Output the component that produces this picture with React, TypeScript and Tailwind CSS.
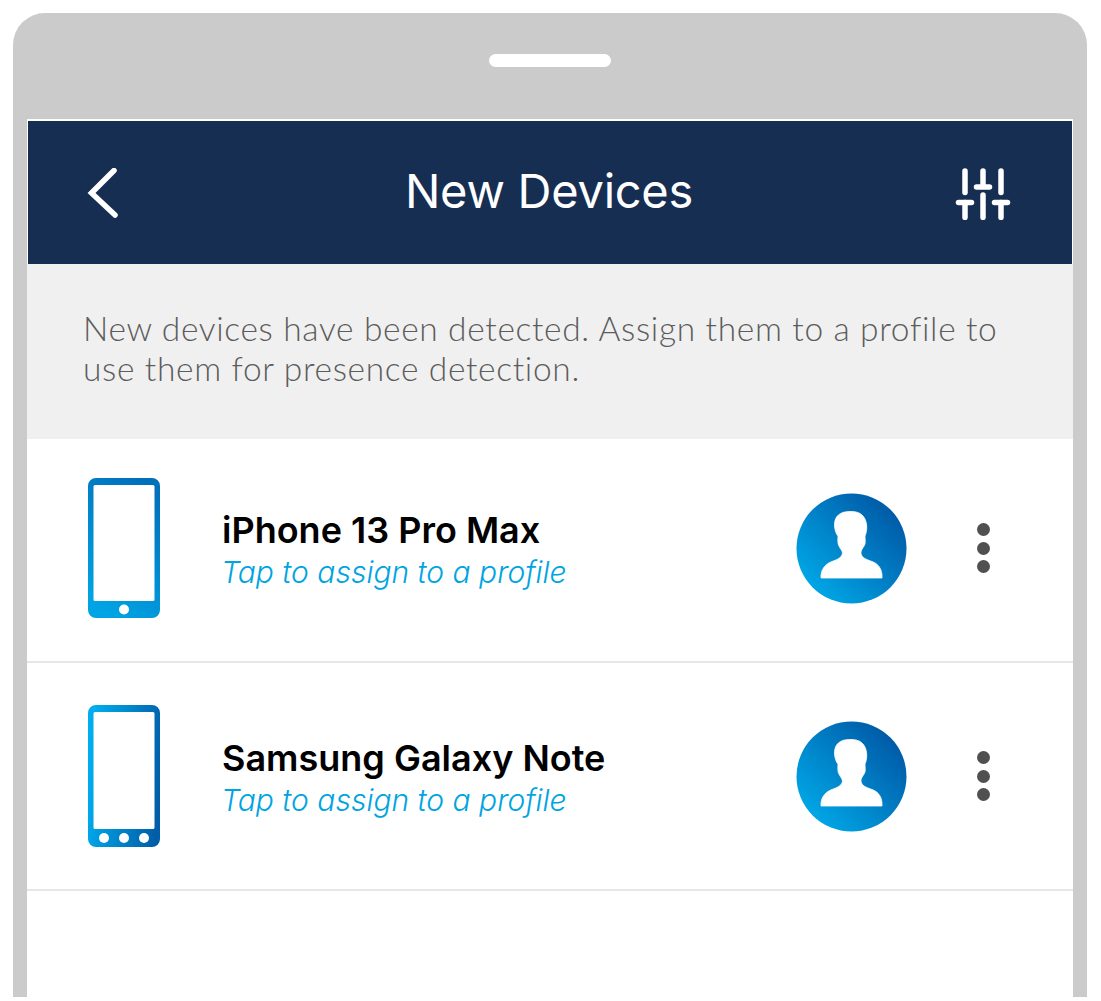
function Avatar({ id }: { id: string }) {
  return (
    <svg width="111" height="111" viewBox="0 0 111 111" className="shrink-0">
      <defs>
        <linearGradient id={id} x1="0.12" y1="0.9" x2="0.9" y2="0.15">
          <stop offset="0" stopColor="#00a9e8" />
          <stop offset="1" stopColor="#0059a6" />
        </linearGradient>
      </defs>
      <circle cx="55.5" cy="55.5" r="55" fill={`url(#${id})`} />
      <path
        d="M25 85 C24.5 77 29 71 36 68.5 C40 67 44.5 65.5 46 62 C47.5 58.5 44.5 56.5 43 53 C41.5 50.5 41.8 47 42 43 C40 41 38.5 36 38.5 32 C38.5 23 44 18.5 54 18.5 C64 18 70 23 70.7 33 C70.9 37 70 41 69 43 C69 47 70 50.5 68 53 C66 56.5 64 59 65.5 62 C67 65.5 72 67 76 68.5 C83 71 86.5 77 86 85 Z"
        fill="#fff"
        stroke="#fff"
        strokeWidth="0.8"
        strokeLinejoin="round"
      />
    </svg>
  );
}

function Dots() {
  return (
    <div className="flex flex-col gap-[5.5px]">
      <div className="w-[13px] h-[13px] rounded-full bg-[#505050]" />
      <div className="w-[13px] h-[13px] rounded-full bg-[#505050]" />
      <div className="w-[13px] h-[13px] rounded-full bg-[#505050]" />
    </div>
  );
}

function PhoneOne() {
  return (
    <svg width="74" height="142" viewBox="0 0 74 142" className="shrink-0">
      <defs>
        <linearGradient id="phone1" x1="0.7" y1="0" x2="0.3" y2="1">
          <stop offset="0" stopColor="#0070bb" />
          <stop offset="1" stopColor="#00a4e4" />
        </linearGradient>
      </defs>
      <path
        fillRule="evenodd"
        fill="url(#phone1)"
        d="M9 1 H65 A8 8 0 0 1 73 9 V133 A8 8 0 0 1 65 141 H9 A8 8 0 0 1 1 133 V9 A8 8 0 0 1 9 1 Z M8 8 A1.5 1.5 0 0 0 6.5 9.5 V122.5 A1.5 1.5 0 0 0 8 124 H66 A1.5 1.5 0 0 0 67.5 122.5 V9.5 A1.5 1.5 0 0 0 66 8 Z"
      />
      <circle cx="37" cy="132.5" r="5" fill="#fff" />
    </svg>
  );
}

function PhoneTwo() {
  return (
    <svg width="74" height="142" viewBox="0 0 74 142" className="shrink-0">
      <defs>
        <linearGradient id="phone2" x1="0" y1="0.4" x2="1" y2="0.6">
          <stop offset="0" stopColor="#00aeef" />
          <stop offset="1" stopColor="#005ea8" />
        </linearGradient>
      </defs>
      <path
        fillRule="evenodd"
        fill="url(#phone2)"
        d="M9 0 H65 A8 8 0 0 1 73 8 V134 A8 8 0 0 1 65 142 H9 A8 8 0 0 1 1 134 V8 A8 8 0 0 1 9 0 Z M8 7 A1.5 1.5 0 0 0 6.5 8.5 V122.5 A1.5 1.5 0 0 0 8 124 H66 A1.5 1.5 0 0 0 67.5 122.5 V8.5 A1.5 1.5 0 0 0 66 7 Z"
      />
      <circle cx="17" cy="133" r="5" fill="#fff" />
      <circle cx="37" cy="133" r="5" fill="#fff" />
      <circle cx="57" cy="133" r="5" fill="#fff" />
    </svg>
  );
}

function Row({ name, phone, id, h }: { name: string; phone: React.ReactNode; id: string; h: string }) {
  return (
    <div className={`flex items-center border-b-2 border-[#e6e6e6] pl-[60px] pr-[83px] ${h}`}>
      {phone}
      <div className="flex-1 pl-[61px] pt-[5px] flex flex-col">
        <div className="font-['Inter',sans-serif] font-semibold text-[36px] leading-[42px] text-black">{name}</div>
        <div className="-ml-px font-['Inter',sans-serif] font-light italic text-[30px] leading-[42px] text-[#00a4e0]">
          Tap to assign to a profile
        </div>
      </div>
      <Avatar id={id} />
      <div className="ml-[70px]">
        <Dots />
      </div>
    </div>
  );
}

export default function App() {
  return (
    <div className="w-[1101px] h-[1001px] bg-white pt-[13px] pl-[13px] overflow-hidden">
      <div className="w-[1074px] h-[984px] bg-[#cbcbcb] rounded-t-[32px] px-[14px] pt-[41px] flex flex-col">
        <div className="w-[122px] h-[13px] rounded-full bg-white self-center shrink-0" />
        <div className="mt-[52px] flex-1 bg-white border-t-2 border-white flex flex-col">
          <div className="h-[143px] mx-px bg-[#162e52] grid grid-cols-[1fr_auto_1fr] items-center pl-[59px] pr-[61px]">
            <svg width="32" height="50" viewBox="0 0 32 50" className="shrink-0">
              <path d="M27 2.5 L4.5 25 L28 47" fill="none" stroke="#fff" strokeWidth="5.5" strokeLinecap="round" strokeLinejoin="miter" />
            </svg>
            <div className="pb-[4px] font-['Inter',sans-serif] text-[47px] leading-[54px] text-white tracking-[-0.25px]">New Devices</div>
            <svg width="56" height="52" viewBox="0 0 56 52" className="shrink-0 mt-[2px] justify-self-end">
              <g stroke="#fff" strokeWidth="5.5" strokeLinecap="round" fill="none">
                <path d="M10 3 V24.5" />
                <path d="M28 3 V17" />
                <path d="M46 3 V24.5" />
                <path d="M21.5 19 H34.5" />
                <path d="M3.5 34.5 H16.5" />
                <path d="M39.5 34.5 H52.5" />
                <path d="M10 34.5 V49.5" />
                <path d="M28 27 V49.5" />
                <path d="M46 34.5 V49.5" />
              </g>
            </svg>
          </div>
          <div className="h-[175px] bg-[#f0f0f0] pl-[56px] pr-[60px] pt-[44px] font-['Lato',sans-serif] font-light text-[33.5px] leading-[40px] text-[#5c5c5c] tracking-[0.66px]">
            New devices have been detected. Assign them to a profile to use them for presence detection.
          </div>
          <Row name="iPhone 13 Pro Max" phone={<PhoneOne />} id="avatar1" h="h-[224px] pb-[4px]" />
          <Row name="Samsung Galaxy Note" phone={<PhoneTwo />} id="avatar2" h="h-[228px]" />
        </div>
      </div>
    </div>
  );
}
